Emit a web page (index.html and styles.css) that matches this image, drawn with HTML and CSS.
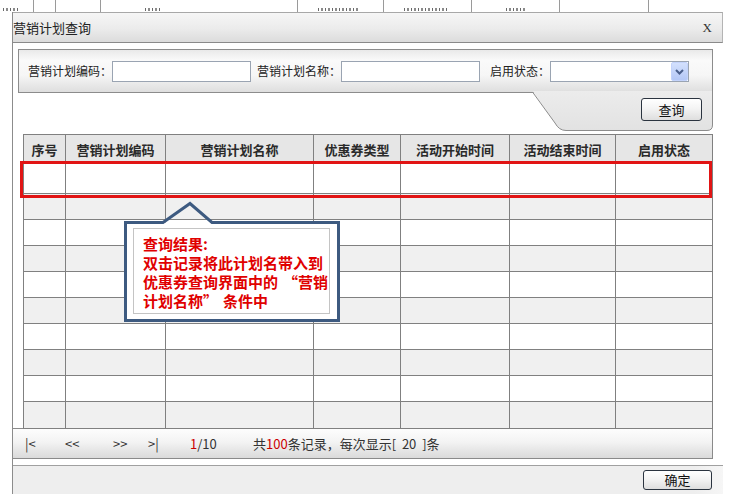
FILE: index.html
```html
<!DOCTYPE html>
<html lang="zh-CN">
<head>
<meta charset="utf-8">
<title>营销计划查询</title>
<link rel="stylesheet" href="styles.css">
</head>
<body>
<div class="backdrop">
  <div class="bg-cell bw33"><i class="frag f3 w16"></i></div>
  <div class="bg-cell bw22"></div>
  <div class="bg-cell bw45"></div>
  <div class="bg-cell bw197"><i class="frag f44 w16"></i></div>
  <div class="bg-cell bw87"><i class="frag f20 w42"></i></div>
  <div class="bg-cell bw88"><i class="frag f20 w44"></i></div>
  <div class="bg-cell bw88"><i class="frag f34 w20"></i></div>
  <div class="bg-cell bw89"></div>
  <div class="bg-cell bw84 last"></div>
</div>

<div class="dialog">
  <div class="titlebar">
    <span class="title">营销计划查询</span>
    <span class="close">X</span>
  </div>

  <div class="search-panel">
    <span class="field-label">营销计划编码：</span>
    <div class="input"></div>
    <span class="field-label gap6">营销计划名称：</span>
    <div class="input"></div>
    <span class="field-label gap10">启用状态：</span>
    <div class="input select">
      <svg class="select-arrow" width="17" height="19" viewBox="0 0 17 19">
        <defs>
          <linearGradient id="sa" x1="0" y1="0" x2="0" y2="1">
            <stop offset="0" stop-color="#d4e1fd"/>
            <stop offset="1" stop-color="#b3c7f6"/>
          </linearGradient>
        </defs>
        <rect x="0.5" y="0.5" width="16" height="18" rx="1.5" fill="url(#sa)" stroke="#c3d3fb"/>
        <path d="M5 8 L8.5 11.5 L12 8" fill="none" stroke="#4a5f8c" stroke-width="2"/>
      </svg>
    </div>
  </div>

  <div class="search-actions">
    <div class="tab">
      <svg class="tab-shape" width="181" height="39" viewBox="0 0 181 39">
        <defs>
          <linearGradient id="tg" x1="0" y1="0" x2="0" y2="1">
            <stop offset="0" stop-color="#ececec"/>
            <stop offset="1" stop-color="#e2e2e2"/>
          </linearGradient>
        </defs>
        <path d="M0.5 -1 L23 31 Q27 38.5 34 38.5 L175 38.5 Q180.5 38.5 180.5 33 L180.5 -1 Z" fill="url(#tg)"/>
        <path d="M0.5 0 L23 31 Q27 38.5 34 38.5 L175 38.5 Q180.5 38.5 180.5 33 L180.5 -1" fill="none" stroke="#8c8c8c"/>
      </svg>
      <button class="btn query">查询</button>
    </div>
  </div>

  <div class="grid-wrap">
    <table class="grid">
      <colgroup>
        <col class="c1"><col class="c2"><col class="c3"><col class="c4"><col class="c5"><col class="c6"><col class="c7">
      </colgroup>
      <thead>
        <tr><th>序号</th><th>营销计划编码</th><th>营销计划名称</th><th>优惠券类型</th><th>活动开始时间</th><th>活动结束时间</th><th>启用状态</th></tr>
      </thead>
      <tbody>
        <tr class="first"><td></td><td></td><td></td><td></td><td></td><td></td><td></td></tr>
        <tr><td></td><td></td><td></td><td></td><td></td><td></td><td></td></tr>
        <tr><td></td><td></td><td></td><td></td><td></td><td></td><td></td></tr>
        <tr><td></td><td></td><td></td><td></td><td></td><td></td><td></td></tr>
        <tr><td></td><td></td><td></td><td></td><td></td><td></td><td></td></tr>
        <tr><td></td><td></td><td></td><td></td><td></td><td></td><td></td></tr>
        <tr><td></td><td></td><td></td><td></td><td></td><td></td><td></td></tr>
        <tr><td></td><td></td><td></td><td></td><td></td><td></td><td></td></tr>
        <tr><td></td><td></td><td></td><td></td><td></td><td></td><td></td></tr>
        <tr class="last"><td></td><td></td><td></td><td></td><td></td><td></td><td></td></tr>
      </tbody>
    </table>
    <div class="highlight"></div>
    <div class="callout">
      <svg class="callout-shape" width="216" height="121" viewBox="0 0 216 121">
        <rect x="1.5" y="21.5" width="213" height="98" fill="#ffffff"/>
        <path d="M1.5 21.5 H39 L66 2.5 L88 21.5 H214.5 V119.5 H1.5 Z" fill="none" stroke="#3d5a80" stroke-width="3" stroke-linejoin="miter"/>
      </svg>
      <div class="callout-body">查询结果:<br>双击记录将此计划名带入到<br>优惠券查询界面中的<span class="q-open">“</span>营销<br>计划名称<span class="q-close">”</span>条件中</div>
    </div>
  </div>

  <div class="pager">
    <span class="pg w40">|&lt;</span>
    <span class="pg w48">&lt;&lt;</span>
    <span class="pg w35">&gt;&gt;</span>
    <span class="pg w42">&gt;|</span>
    <span class="pg w63"><em class="red">1</em>/10</span>
    <span class="pg">共<em class="red">100</em>条记录，每次显示[&nbsp;&nbsp;20&nbsp;&nbsp;]条</span>
  </div>

  <div class="footer">
    <button class="btn ok">确定</button>
  </div>
</div>
</body>
</html>
```

FILE: styles.css
```css
html, body {
  margin: 0;
  padding: 0;
}
body {
  width: 733px;
  height: 503px;
  overflow: hidden;
  background: #ffffff;
  font-family: "Noto Sans CJK SC", "Noto Sans", sans-serif;
  font-size: 12px;
  color: #222222;
}

/* page behind the dialog: only the bottoms of its glyphs show */
.backdrop {
  display: flex;
  height: 12px;
  overflow: hidden;
}
.bg-cell {
  box-sizing: border-box;
  height: 12px;
  border-right: 1px solid #9a9a9a;
  display: flex;
  align-items: flex-end;
  padding-bottom: 1px;
}
.frag {
  display: block;
  height: 3px;
  background: repeating-linear-gradient(90deg, #6a6a6a 0 1px, transparent 1px 3px, #8a8a8a 3px 5px, transparent 5px 7px);
}
.f3 { margin-left: 3px; }
.f20 { margin-left: 20px; }
.f34 { margin-left: 34px; }
.f44 { margin-left: 44px; }
.w16 { width: 16px; }
.w20 { width: 20px; }
.w42 { width: 42px; }
.w44 { width: 44px; }
.bw33 { width: 34px; }
.bw22 { width: 22px; }
.bw45 { width: 45px; }
.bw197 { width: 197px; }
.bw87 { width: 87px; }
.bw88 { width: 88px; }
.bw89 { width: 89px; }
.bw84 { width: 84px; }
.bg-cell.last { border-right: none; }

/* dialog */
.dialog {
  width: 711px;
  margin-left: 12px;
  box-sizing: border-box;
  border-left: 1px solid #8c8c8c;
  background: #ffffff;
}
.titlebar {
  height: 31px;
  box-sizing: border-box;
  border-top: 1px solid #a8a8a8;
  border-bottom: 1px solid #8a8a8a;
  border-right: 1px solid #b4b4b4;
  background: linear-gradient(#f6f6f6, #ebebeb 55%, #dcdcdc);
  display: flex;
  align-items: center;
  justify-content: space-between;
  padding: 0 10px 0 0;
}
.title {
  font-size: 13px;
  line-height: 16px;
  color: #222222;
}
.close {
  font-family: "Liberation Serif", serif;
  font-size: 13px;
  line-height: 14px;
  color: #333333;
}

/* search panel */
.search-panel {
  margin: 6px 0 0 5px;
  width: 695px;
  height: 44px;
  box-sizing: border-box;
  border: 1px solid #8c8c8c;
  background: linear-gradient(#e9e9e9, #fafafa 25%, #f6f6f6 60%, #dedede);
  display: flex;
  align-items: center;
  padding-left: 9px;
}
.field-label {
  font-size: 12px;
  line-height: 14px;
  color: #222222;
  white-space: nowrap;
}
.gap6 { margin-left: 6px; }
.gap10 { margin-left: 10px; }
.input {
  width: 139px;
  height: 21px;
  box-sizing: border-box;
  border: 1px solid #9aa4b2;
  background: #ffffff;
}
.select {
  display: flex;
  justify-content: flex-end;
  align-items: center;
}
.select-arrow {
  display: block;
}

.search-actions {
  display: flex;
  justify-content: flex-end;
  margin-right: 10px;
  margin-top: -1px;
}
.tab {
  position: relative;
  width: 181px;
  height: 39px;
  display: flex;
  justify-content: flex-end;
  align-items: flex-start;
  padding: 6px 11px 0 0;
  box-sizing: border-box;
}
.tab-shape {
  position: absolute;
  left: 0;
  top: 0;
  overflow: visible;
}
.btn {
  position: relative;
  box-sizing: border-box;
  border: 1px solid #2b3440;
  border-radius: 3px;
  background: linear-gradient(#ffffff, #f4f4f4 45%, #dedede);
  font-family: "Noto Sans CJK SC", sans-serif;
  font-size: 13px;
  line-height: 16px;
  color: #111111;
  padding: 0;
}
.btn.query {
  width: 61px;
  height: 23px;
}
.btn.ok {
  width: 69px;
  height: 20px;
}

/* grid */
.grid-wrap {
  position: relative;
  margin: 3px 0 0 10px;
  width: 690px;
}
.grid {
  table-layout: fixed;
  border-collapse: collapse;
  width: 690px;
}
.grid col.c1 { width: 42px; }
.grid col.c2 { width: 100px; }
.grid col.c3 { width: 148px; }
.grid col.c4 { width: 87px; }
.grid col.c5 { width: 109px; }
.grid col.c6 { width: 106px; }
.grid col.c7 { width: 97px; }
.grid th, .grid td {
  border: 1px solid #808080;
  padding: 0;
}
.grid th {
  height: 28px;
  background: #e6e6e6;
  font-size: 13px;
  font-weight: bold;
  color: #2a2a2a;
  text-align: center;
}
.grid td {
  height: 25px;
  background: #ffffff;
}
.grid tr.first td { height: 29px; }
.grid tr.last td { height: 26px; }
.grid tbody tr:nth-child(even) td { background: #f0f0f0; }

.highlight {
  position: absolute;
  left: -3px;
  top: 27px;
  width: 692px;
  height: 37px;
  box-sizing: border-box;
  border: 3px solid #e11414;
}

.callout {
  position: absolute;
  left: 101px;
  top: 67px;
  width: 216px;
  height: 121px;
}
.callout-shape {
  position: absolute;
  left: 0;
  top: 0;
}
.callout-body {
  position: absolute;
  left: 9px;
  top: 27px;
  width: 197px;
  height: 86px;
  box-sizing: border-box;
  border: 1px solid #c4c4c4;
  background: #ffffff;
  padding: 5px 0 0 9px;
  font-size: 15px;
  line-height: 19px;
  font-weight: bold;
  color: #e00000;
  white-space: nowrap;
}
.q-open {
  margin-left: 5px;
}
.q-close {
  margin-right: 5px;
}

/* pager */
.pager {
  margin-top: -1px;
  width: 700px;
  height: 31px;
  box-sizing: border-box;
  border-top: 1px solid #8a8a8a;
  border-bottom: 1px solid #8a8a8a;
  border-right: 1px solid #8a8a8a;
  background: linear-gradient(#fdfdfd, #f3f3f3 45%, #dadada);
  display: flex;
  align-items: center;
  padding-left: 12px;
  font-size: 13px;
  line-height: 16px;
  color: #333333;
}
.pg {
  white-space: pre;
}
.w40 { width: 40px; }
.w48 { width: 48px; }
.w35 { width: 35px; }
.w42 { width: 42px; }
.w63 { width: 63px; }
.red {
  font-style: normal;
  color: #cc0000;
}

/* footer */
.footer {
  margin-top: 6px;
  width: 710px;
  height: 29px;
  box-sizing: border-box;
  border-top: 1px solid #a0a0a0;
  background: linear-gradient(90deg, #eeeeee 96%, #f6f6f6);
  display: flex;
  justify-content: flex-end;
  align-items: flex-start;
  padding: 4px 11px 0 0;
}
```
